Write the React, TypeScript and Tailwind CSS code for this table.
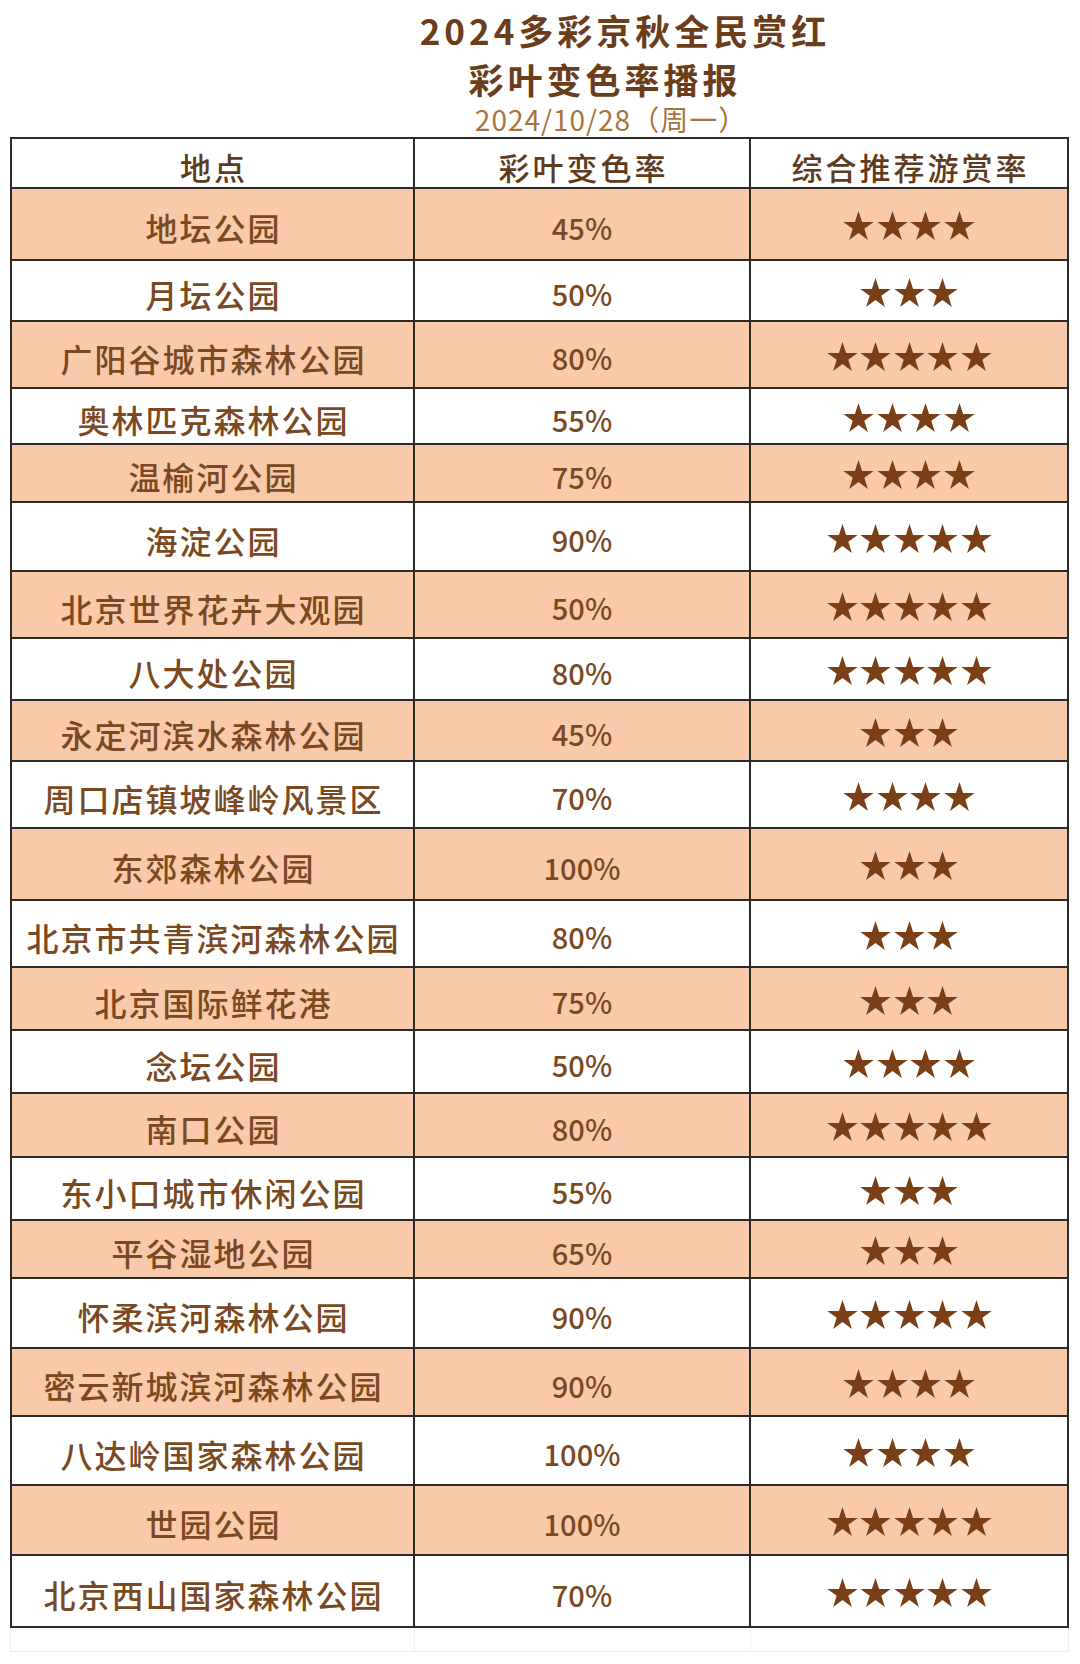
import React from "react";

type Row = { name: string; pct: string; stars: number; h: string };

const rows: Row[] = [
  { name: "地坛公园", pct: "45%", stars: 4, h: "h-[72px]" },
  { name: "月坛公园", pct: "50%", stars: 3, h: "h-[61px]" },
  { name: "广阳谷城市森林公园", pct: "80%", stars: 5, h: "h-[67px]" },
  { name: "奥林匹克森林公园", pct: "55%", stars: 4, h: "h-[56px]" },
  { name: "温榆河公园", pct: "75%", stars: 4, h: "h-[58px]" },
  { name: "海淀公园", pct: "90%", stars: 5, h: "h-[69px]" },
  { name: "北京世界花卉大观园", pct: "50%", stars: 5, h: "h-[67px]" },
  { name: "八大处公园", pct: "80%", stars: 5, h: "h-[62px]" },
  { name: "永定河滨水森林公园", pct: "45%", stars: 3, h: "h-[61px]" },
  { name: "周口店镇坡峰岭风景区", pct: "70%", stars: 4, h: "h-[67px]" },
  { name: "东郊森林公园", pct: "100%", stars: 3, h: "h-[72px]" },
  { name: "北京市共青滨河森林公园", pct: "80%", stars: 3, h: "h-[67px]" },
  { name: "北京国际鲜花港", pct: "75%", stars: 3, h: "h-[63px]" },
  { name: "念坛公园", pct: "50%", stars: 4, h: "h-[63px]" },
  { name: "南口公园", pct: "80%", stars: 5, h: "h-[64px]" },
  { name: "东小口城市休闲公园", pct: "55%", stars: 3, h: "h-[63px]" },
  { name: "平谷湿地公园", pct: "65%", stars: 3, h: "h-[58px]" },
  { name: "怀柔滨河森林公园", pct: "90%", stars: 5, h: "h-[70px]" },
  { name: "密云新城滨河森林公园", pct: "90%", stars: 4, h: "h-[68px]" },
  { name: "八达岭国家森林公园", pct: "100%", stars: 4, h: "h-[69px]" },
  { name: "世园公园", pct: "100%", stars: 5, h: "h-[70px]" },
  { name: "北京西山国家森林公园", pct: "70%", stars: 5, h: "h-[72px]" },
];

function Star() {
  return (
    <svg viewBox="0 0 24 22.7" className="w-[31px] h-[29px] block" aria-hidden="true">
      <polygon
        fill="#7a3f16"
        points="12,0 14.81,8.63 23.89,8.64 16.55,13.98 19.35,22.61 12,17.28 4.65,22.61 7.45,13.98 0.11,8.64 9.19,8.63"
      />
    </svg>
  );
}

const cjk = "font-['Noto_Sans_CJK_SC','Noto_Sans',sans-serif]";

export default function App() {
  return (
    <div className={`w-[1080px] h-[1664px] bg-white overflow-hidden ${cjk}`}>
      <div className="flex flex-col items-center pt-[12px]">
        <div className="pl-[170px] text-[35px] leading-[35px] font-bold tracking-[4px] text-[#6b3d1b] whitespace-nowrap">
          2024多彩京秋全民赏红
        </div>
        <div className="mt-[14px] pl-[130px] text-[35px] leading-[35px] font-bold tracking-[4px] text-[#6b3d1b] whitespace-nowrap">
          彩叶变色率播报
        </div>
        <div className="mt-[9px] pl-[142px] text-[28px] leading-[28px] tracking-[1px] text-[#a8733f] whitespace-nowrap">
          2024/10/28（周一）
        </div>
      </div>

      <div className="mt-[4px] ml-[10px] w-[1059px] border-t-2 border-l-2 border-r-2 border-[#2e2a27]">
        <div className="grid grid-cols-[403px_336px_316px] h-[50px] border-b-2 border-[#2e2a27] bg-white text-[#5e3b1e] text-[31px] leading-none tracking-[3px] font-medium">
          <div className="flex items-center justify-center border-r-2 border-[#2e2a27] pt-[6px] pl-[3px]">地点</div>
          <div className="flex items-center justify-center border-r-2 border-[#2e2a27] pt-[6px] pl-[3px]">彩叶变色率</div>
          <div className="flex items-center justify-center pt-[6px] pl-[3px]">综合推荐游赏率</div>
        </div>
        {rows.map((r, i) => (
          <div
            key={r.name}
            className={`grid grid-cols-[403px_336px_316px] ${r.h} border-b-2 border-[#2e2a27] ${
              i % 2 === 0 ? "bg-[#f8caa9]" : "bg-white"
            }`}
          >
            <div className="flex items-center justify-center border-r-2 border-[#2e2a27] pt-[6px] pl-[2px] text-[32px] leading-none tracking-[2px] font-medium text-[#7a4922] whitespace-nowrap">
              {r.name}
            </div>
            <div className="flex items-center justify-center border-r-2 border-[#2e2a27] pt-[6px] text-[29px] leading-none font-medium text-[#7a4922]">
              {r.pct}
            </div>
            <div className="flex items-center justify-center gap-[2.5px] pt-[3px]">
              {Array.from({ length: r.stars }).map((_, k) => (
                <Star key={k} />
              ))}
            </div>
          </div>
        ))}
      </div>
      <div className="ml-[10px] w-[1059px] h-[24px] grid grid-cols-[405px_336px_318px] border-b border-[#ededed]">
        <div className="border-l border-r border-[#f0f0f0]" />
        <div className="border-r border-[#f3f3f3]" />
        <div className="border-r border-[#f0f0f0]" />
      </div>
    </div>
  );
}
